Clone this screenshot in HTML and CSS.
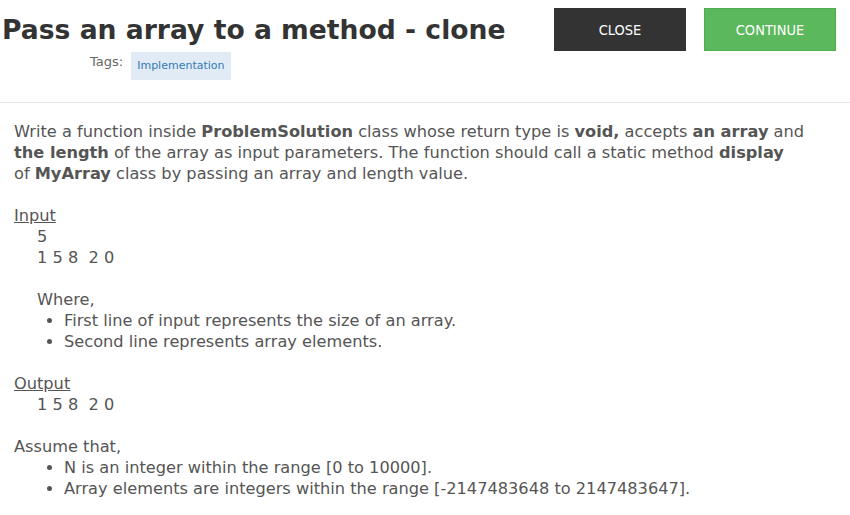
FILE: index.html
```html
<!DOCTYPE html>
<html lang="en">

<head>
    <meta charset="UTF-8">
    <title>Pass an array to a method - clone</title>
    <link rel="stylesheet" href="styles.css">
</head>

<body>
    <div class="header">
        <div class="title-block">
            <h1>Pass an array to a method - clone</h1>
            <div class="tags">
                <span class="tags-label">Tags:</span>
                <span class="tag">Implementation</span>
            </div>
        </div>
        <div class="actions">
            <button class="btn btn-close">CLOSE</button>
            <button class="btn btn-continue">CONTINUE</button>
        </div>
    </div>

    <div class="problem">
        <p>Write a function inside <b>ProblemSolution</b> class whose return type is <b>void,</b> accepts <b>an array</b> and<br>
            <b>the length</b> of the array as input parameters. The function should call a static method <b>display</b><br>
            of <b>MyArray</b> class by passing an array and length value.</p>

        <div class="section">
            <span class="section-title">Input</span>
            <div class="indent">
                <pre class="sample">5
1 5 8  2 0</pre>
                <br>
                Where,
                <ul>
                    <li>First line of input represents the size of an array.</li>
                    <li>Second line represents array elements.</li>
                </ul>
            </div>
        </div>

        <div class="section">
            <span class="section-title">Output</span>
            <div class="indent">
                <pre class="sample">1 5 8  2 0</pre>
            </div>
        </div>

        <div class="section">
            Assume that,
            <ul>
                <li>N is an integer within the range [0 to 10000].</li>
                <li>Array elements are integers within the range [-2147483648 to 2147483647].</li>
            </ul>
        </div>
    </div>
</body>

</html>
```

FILE: styles.css
```css
body {
    font-family: 'DejaVu Sans', sans-serif;
    margin: 0;
    padding: 0;
    background-color: #fff;
    color: #555;
}

.header {
    display: flex;
    justify-content: space-between;
    align-items: flex-start;
    border-bottom: 1px solid #e5e5e5;
    height: 102px;
}

.title-block {
    padding-left: 2px;
}

h1 {
    margin: 12px 0 0 0;
    font-size: 26.6px;
    line-height: 36px;
    color: #333;
}

.tags {
    display: flex;
    align-items: flex-start;
    margin-left: 88px;
    margin-top: 4px;
}

.tags-label {
    font-size: 13px;
    color: #666;
    margin-top: 2px;
    margin-right: 8px;
}

.tag {
    background-color: #e1ebf5;
    color: #337ab7;
    font-size: 11px;
    padding: 7px 6px 8px;
}

.actions {
    display: flex;
    gap: 18px;
    margin-top: 8px;
    margin-right: 14px;
}

.btn {
    color: #fff;
    border: 1px solid transparent;
    font-family: 'DejaVu Sans Condensed', 'DejaVu Sans', sans-serif;
    font-size: 14.5px;
    width: 132px;
    height: 43px;
    cursor: pointer;
}

.btn-close {
    background-color: #333;
}

.btn-continue {
    background-color: #5cb85c;
    border-color: #4cae4c;
}

.problem {
    padding: 18px 14px;
    font-size: 16.2px;
    line-height: 21px;
}

.problem p {
    margin: 0 0 21px 0;
}

.problem b {
    color: #555;
}

.section {
    margin-bottom: 21px;
}

.section-title {
    text-decoration: underline;
}

.indent {
    padding-left: 23px;
}

.sample {
    font-family: 'DejaVu Sans', sans-serif;
    margin: 0;
    white-space: pre;
}

ul {
    margin: 0;
    padding-left: 50px;
}

.indent ul {
    padding-left: 27px;
}
```
